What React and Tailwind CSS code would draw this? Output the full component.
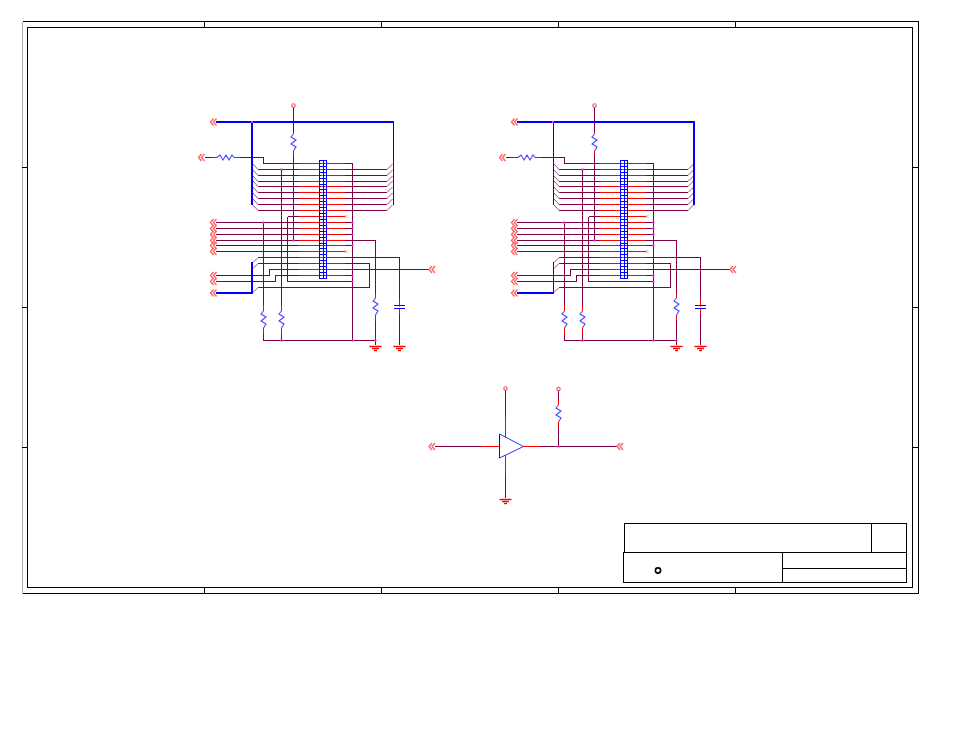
const PURPLE = '#7f0040';
const RED = '#ff0000';
const BLUE = '#0000ff';
const PINK = '#ff20e0';

// connector pin rows, top to bottom
const rows = [163.5, 169.5, 175.5, 181.5, 186.5, 192.5, 198.5, 204.5, 210.5, 216.5, 222.5, 228.5, 234.5, 240.5, 245.5, 251.5, 257.5, 263.5, 269.5, 275.5];
const busRows = [169.5, 175.5, 181.5, 186.5, 192.5, 198.5, 204.5, 210.5];

// all the purple nets of one sheet
const nets = [
  'M293.5 106V240.5',
  'M205 157.5H240H263.5V163.5H352.5V340.5',
  'M281.5 169.5V340.5',
  'M263.5 222.5V340.5H376',
  'M287.5 216.5V281.5H352.5',
  'M287.5 216.5H345',
  'M216 222.5H352.5',
  'M216 228.5H352.5',
  'M216 234.5H352.5',
  'M216 240.5H375.5V345',
  'M216 245.5H352.5',
  'M216 251.5H345',
  'M257.5 257.5H399.5V345',
  'M257.5 263.5H369.5V287.5H257.5',
  'M216 275.5H269.5V269.5H429',
  'M216 281.5H275.5V275.5H352.5',
];

const redStubs = [
  'M293.5 132V156',
  'M212 157.5H240',
  'M263.5 305V334',
  'M281.5 305V334',
  'M375.5 294V321',
  'M399.5 299V314',
];

const junctions = [
  [252, 122], [281.5, 169.5], [263.5, 222.5], [352.5, 222.5], [352.5, 228.5], [352.5, 234.5],
  [293.5, 240.5], [352.5, 245.5], [352.5, 275.5], [352.5, 281.5], [281.5, 340.5], [352.5, 340.5], [375.5, 340.5],
];

function Arrow({ x, y }) {
  return (
    <g fill="none" stroke="#ff6464" strokeWidth="1.4">
      <polyline points={`${x + 3},${y - 3.5} ${x},${y} ${x + 3},${y + 3.5}`} />
      <polyline points={`${x + 6},${y - 3.5} ${x + 3},${y} ${x + 6},${y + 3.5}`} />
    </g>
  );
}

function ResistorV({ x, y }) {
  const p = [[0, 0], [-2.5, 3], [2.5, 6], [-2.5, 10], [2.5, 13], [0, 17]];
  return (
    <g>
      <line x1={x} x2={x} y1={y} y2={y + 17} stroke="white" strokeWidth="3" />
      <polyline points={p.map(([a, b]) => `${x + a},${y + b}`).join(' ')} fill="none" stroke="#4646ff" strokeWidth="1.1" />
    </g>
  );
}

function ResistorH({ x, y }) {
  const p = [[0, 0], [3, -2.5], [6, 2.5], [9, -2.5], [12, 2.5], [15, -2.5], [17, 0]];
  return (
    <g>
      <line x1={x} x2={x + 17} y1={y} y2={y} stroke="white" strokeWidth="3" />
      <polyline points={p.map(([a, b]) => `${x + a},${y + b}`).join(' ')} fill="none" stroke="#4646ff" strokeWidth="1.1" />
    </g>
  );
}

function Ground({ x, y }) {
  return (
    <g stroke={RED} strokeWidth="1.4">
      <line x1={x - 6} x2={x + 6} y1={y} y2={y} />
      <line x1={x - 3.5} x2={x + 3.5} y1={y + 2} y2={y + 2} />
      <line x1={x - 1.5} x2={x + 1.5} y1={y + 4} y2={y + 4} />
    </g>
  );
}

function Power({ x, y }) {
  return <circle cx={x} cy={y} r="1.7" fill="white" stroke="#ff4848" strokeWidth="1.1" />;
}

function Cross({ x, y }) {
  return (
    <g stroke="#c8a890" strokeWidth="0.8">
      <line x1={x - 1.5} x2={x + 1.5} y1={y - 1.5} y2={y + 1.5} />
      <line x1={x - 1.5} x2={x + 1.5} y1={y + 1.5} y2={y - 1.5} />
    </g>
  );
}

function Connector({ right = 326.5 }) {
  return (
    <g shapeRendering="crispEdges">
      {rows.map((y) => (
        <g key={y} stroke={RED} strokeWidth="1">
          <line x1="299" x2="319" y1={y} y2={y} />
          <line x1={right} x2="345" y1={y} y2={y} />
        </g>
      ))}
      <g stroke={BLUE} strokeWidth="1" fill="none">
        <rect x="319.5" y="160.5" width={right - 319.5} height="118" />
        <line x1="323.5" x2="323.5" y1="160" y2="279" />
        {rows.map((y, i) => (
          <line key={y} x1="319" x2={right} y1={i === 0 ? 166.5 : y + 3} y2={i === 0 ? 166.5 : y + 3} />
        ))}
        {rows.map((y) => (
          <g key={y} stroke="#5a5aff">
            <line x1="321" x2="322.5" y1={y} y2={y} />
            <line x1="324.5" x2="326" y1={y} y2={y} />
          </g>
        ))}
      </g>
    </g>
  );
}

function Sheet({ dx, thickLeft, connectorRight }) {
  const leftW = thickLeft ? 2 : 1;
  const rightW = thickLeft ? 1 : 2;
  return (
    <g transform={`translate(${dx} 0)`}>
      {/* nets */}
      <g fill="none" stroke={PURPLE} strokeWidth="1" shapeRendering="crispEdges">
        {nets.map((d) => <path key={d} d={d} />)}
        {busRows.map((y) => <line key={y} x1="258" x2="387" y1={y} y2={y} />)}
      </g>
      {/* bus entries */}
      <g stroke="#a0508a" strokeWidth="1">
        {busRows.map((y) => (
          <g key={y}>
            <line x1="253" y1={y - 5.5} x2="258" y2={y} />
            <line x1="387" y1={y} x2="392.5" y2={y - 5.5} />
          </g>
        ))}
        <line x1="253" y1="262.5" x2="258" y2="257.5" />
        <line x1="253" y1="268.5" x2="258" y2="263.5" />
        <line x1="253" y1="292.5" x2="258" y2="287.5" />
      </g>
      <g stroke={RED} strokeWidth="1" fill="none" shapeRendering="crispEdges">
        {redStubs.map((d) => <path key={d} d={d} />)}
      </g>
      <Connector right={connectorRight} />
      {/* buses */}
      <g stroke={BLUE} fill="none" shapeRendering="crispEdges">
        <line x1="216" x2="394" y1="122" y2="122" strokeWidth="2" />
        <line x1="252" x2="252" y1="122" y2="205" strokeWidth={leftW} />
        <line x1="393" x2="393" y1="122" y2="205" strokeWidth={rightW} />
        <line x1="252" x2="252" y1="262" y2="293" strokeWidth={leftW} />
        <line x1="216" x2="253" y1="293" y2="293" strokeWidth="2" />
      </g>
      <ResistorV x={293.5} y={134} />
      <ResistorH x={217} y={157.5} />
      <ResistorV x={263.5} y={311} />
      <ResistorV x={281.5} y={311} />
      <ResistorV x={375.5} y={298} />
      <g stroke={BLUE} strokeWidth="1" shapeRendering="crispEdges">
        <line x1="394" x2="405" y1="305.5" y2="305.5" />
        <line x1="394" x2="405" y1="308.5" y2="308.5" />
      </g>
      <line x1="399.5" x2="399.5" y1="306.5" y2="308" stroke="white" strokeWidth="1" />
      <Power x={293.5} y={105.5} />
      <Arrow x={210.5} y={122} />
      <Arrow x={198.5} y={157.5} />
      {[222.5, 228.5, 234.5, 240.5, 245.5, 251.5, 275.5, 281.5, 293].map((y) => <Arrow key={y} x={210.5} y={y} />)}
      <Arrow x={429} y={269.5} />
      <Cross x={346} y={216.5} />
      <Cross x={346} y={251.5} />
      <Ground x={375.5} y={346.5} />
      <Ground x={399.5} y={346.5} />
      {junctions.map(([x, y]) => <rect key={`${x}-${y}`} x={x - 1} y={y - 1} width="2" height="2" fill={PINK} />)}
    </g>
  );
}

function Buffer() {
  return (
    <g>
      <g fill="none" stroke={PURPLE} strokeWidth="1" shapeRendering="crispEdges">
        <path d="M505.5 389V417" />
        <path d="M505.5 475V498" />
        <path d="M435 446.5H482" />
        <path d="M540 446.5H617" />
        <path d="M558.5 389V446" />
      </g>
      <g fill="none" stroke={RED} strokeWidth="1" shapeRendering="crispEdges">
        <path d="M505.5 417V437" />
        <path d="M505.5 455V475" />
        <path d="M482 446.5H499" />
        <path d="M523 446.5H540" />
        <path d="M558.5 400V427" />
      </g>
      <polygon points="499.5,434 523.5,446.5 499.5,458" fill="white" stroke="#3030ff" strokeWidth="1" />
      <line x1="499.5" x2="499.5" y1="434" y2="458" stroke={BLUE} strokeWidth="1" shapeRendering="crispEdges" />
      <ResistorV x={558.5} y={405} />
      <Power x={505.5} y={388.5} />
      <Power x={558.5} y={389} />
      <Arrow x={429} y={446.5} />
      <Arrow x={617} y={446.5} />
      <Ground x={505.5} y={499.5} />
      <rect x="557.5" y="445.5" width="2" height="2" fill={PINK} />
    </g>
  );
}

function Frame() {
  const xTicks = [204.5, 381.5, 558.5, 735.5];
  const yTicks = [167.5, 307.5, 447.5];
  return (
    <g fill="none" stroke="black" strokeWidth="1" shapeRendering="crispEdges">
      <path d="M22.5 21.5H918.5V593.5H22.5" />
      <line x1="22.5" x2="22.5" y1="21.5" y2="593.5" stroke="#a8a8a8" />
      <rect x="27.5" y="27.5" width="885" height="560" />
      {xTicks.map((x) => (
        <g key={x}>
          <line x1={x} x2={x} y1="22" y2="27" />
          <line x1={x} x2={x} y1="588" y2="593" />
        </g>
      ))}
      {yTicks.map((y) => (
        <g key={y}>
          <line x1="22" x2="27" y1={y} y2={y} />
          <line x1="913" x2="918" y1={y} y2={y} />
        </g>
      ))}
      {/* title block */}
      <rect x="624.5" y="523.5" width="282" height="29" />
      <line x1="871.5" x2="871.5" y1="523" y2="552" />
      <rect x="623.5" y="552.5" width="283" height="30" />
      <line x1="782.5" x2="782.5" y1="552" y2="582" />
      <line x1="782" x2="906" y1="568.5" y2="568.5" />
      <circle cx="658" cy="570.5" r="2.6" strokeWidth="1.6" shapeRendering="auto" />
    </g>
  );
}

export default function App() {
  return (
    <div className="h-[738px] w-[954px] overflow-hidden bg-white">
      <svg className="block" width="954" height="738" viewBox="0 0 954 738">
        <Frame />
        <Sheet dx={0} thickLeft connectorRight={326.5} />
        <Sheet dx={301} thickLeft={false} connectorRight={326.5} />
        <Buffer />
      </svg>
    </div>
  );
}
